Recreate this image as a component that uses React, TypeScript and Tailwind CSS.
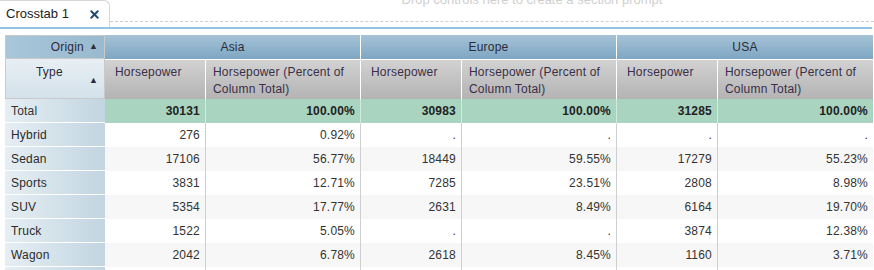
import { X } from "lucide-react";

type Row = { type: string; vals: string[] };

const rows: Row[] = [
  { type: "Hybrid", vals: ["276", "0.92%", ".", ".", ".", "."] },
  { type: "Sedan", vals: ["17106", "56.77%", "18449", "59.55%", "17279", "55.23%"] },
  { type: "Sports", vals: ["3831", "12.71%", "7285", "23.51%", "2808", "8.98%"] },
  { type: "SUV", vals: ["5354", "17.77%", "2631", "8.49%", "6164", "19.70%"] },
  { type: "Truck", vals: ["1522", "5.05%", ".", ".", "3874", "12.38%"] },
  { type: "Wagon", vals: ["2042", "6.78%", "2618", "8.45%", "1160", "3.71%"] },
  { type: "", vals: ["", "", "", "", "", ""] },
];

const totals = ["30131", "100.00%", "30983", "100.00%", "31285", "100.00%"];
const origins = ["Asia", "Europe", "USA"];

const App = () => {
  return (
    <div className="h-[270px] w-[874px] overflow-hidden bg-white font-['Liberation_Sans',Arial,sans-serif] text-[12px] tracking-[0.2px] text-[#333]">
      {/* tab strip */}
      <div className="relative flex h-[27px]">
        <div className="z-10 flex h-[27px] w-[110px] items-center justify-between rounded-tr-[6px] border-r border-t border-[#d6d6d6] bg-white pl-[6px] pr-[8px] text-[13px] tracking-normal text-[#222]">
          <span>Crosstab 1</span>
          <X size={13} strokeWidth={3.5} className="text-[#1e4a72]" />
        </div>
        <div className="relative flex-1">
          <div className="absolute left-0 right-0 top-[-10px] pl-[80px] text-center text-[13px] tracking-normal text-[#cfcfcf]">
            Drop controls here to create a section prompt
          </div>
          <div className="absolute left-0 right-0 top-[21px] border-t border-dashed border-[#cccccc]" />
        </div>
      </div>
      <div className="mr-[2px] h-[2px] bg-[#92c5e3]" />

      {/* crosstab */}
      <div className="ml-[5px] mt-[6px] grid w-[868px] grid-cols-[100px_101px_155px_101px_155px_101px_155px]">
        {/* origin row */}
        <div className="flex h-[24px] items-center justify-end gap-[5px] border border-[#c9c9c9] bg-gradient-to-r from-[#a9c6da] to-[#98b9cf] pr-[6px] text-[#2b2b3a]">
          <span>Origin</span>
          <span className="text-[9px]">▲</span>
        </div>
        {origins.map((o, i) => (
          <div
            key={o}
            className={`col-span-2 flex h-[24px] items-center justify-center bg-gradient-to-b from-[#a5c3d7] to-[#7ea6c2] text-[#2b2b3a] ${i < 2 ? "border-r border-white" : ""}`}
          >
            {o}
          </div>
        ))}

        {/* measure row */}
        <div className="relative h-[40px] border-x border-b border-[#c9c9c9] bg-gradient-to-b from-[#e8eff4] to-[#d3e1ea] pl-[30px] pt-[4px] text-[#2b2b3a]">
          Type
          <span className="absolute bottom-[11px] right-[6px] text-[9px]">▲</span>
        </div>
        {origins.map((o, i) => (
          <div key={o} className="contents">
            <div className="h-[40px] border-r border-t border-white bg-gradient-to-b from-[#d2d2d2] to-[#b3b3b3] pl-[10px] pt-[4px] leading-[17px] text-[#3a2f48]">
              Horsepower
            </div>
            <div
              className={`h-[40px] border-t border-white bg-gradient-to-b from-[#d2d2d2] to-[#b3b3b3] pl-[7px] pt-[4px] leading-[17px] text-[#3a2f48] ${i < 2 ? "border-r" : ""}`}
            >
              Horsepower (Percent of
              <br />
              Column Total)
            </div>
          </div>
        ))}

        {/* total row */}
        <div className="flex h-[24px] items-center border-b border-white bg-gradient-to-r from-[#e6eef3] to-[#c2d5e1] pl-[6px]">
          Total
        </div>
        {totals.map((v, i) => (
          <div
            key={i}
            className={`flex h-[24px] items-center justify-end bg-[#a8d4c0] pr-[5px] font-bold text-[#222] ${i < 5 ? "border-r border-[#d4e9df]" : ""}`}
          >
            {v}
          </div>
        ))}

        {/* data rows */}
        {rows.map((r, ri) => (
          <div key={ri} className="contents">
            <div className="flex h-[24px] items-center border-b border-white bg-gradient-to-r from-[#e6eef3] to-[#c2d5e1] pl-[6px] text-[#2b2b2b]">
              {r.type}
            </div>
            {r.vals.map((v, i) => (
              <div
                key={i}
                className={`flex h-[24px] items-center justify-end pr-[5px] ${ri % 2 === 1 ? "bg-[#f7f7f7]" : "bg-white"} ${i < 5 ? "border-r border-[#cfcfcf]" : ""}`}
              >
                {v}
              </div>
            ))}
          </div>
        ))}
      </div>
    </div>
  );
};

export default App;
